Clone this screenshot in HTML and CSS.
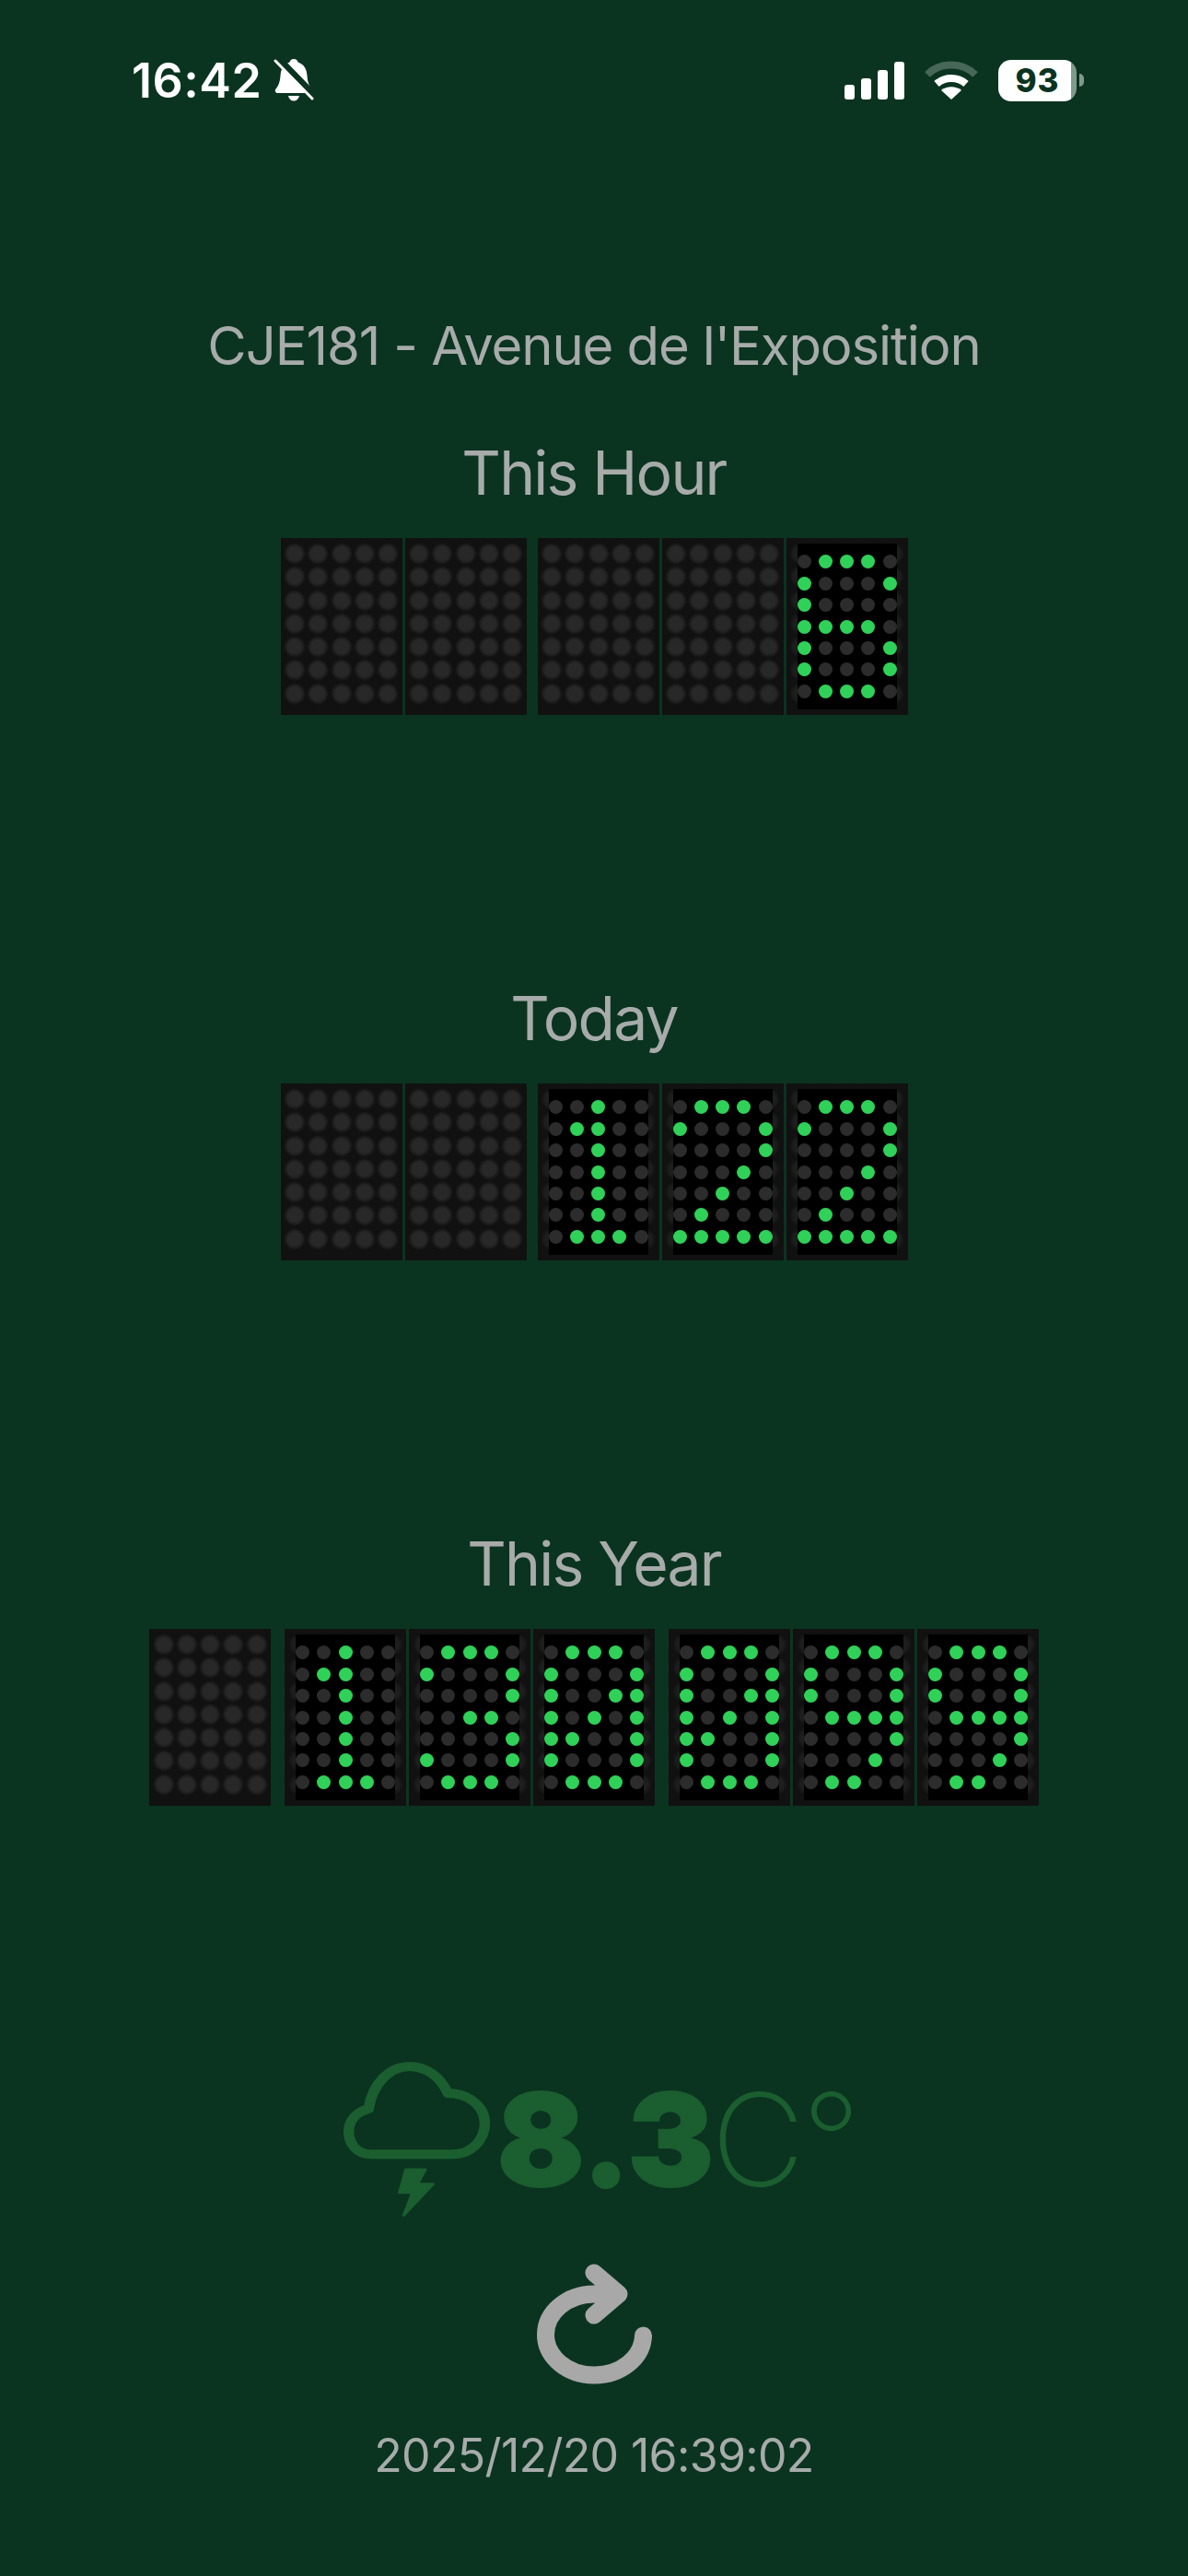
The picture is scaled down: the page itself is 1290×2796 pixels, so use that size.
FILE: index.html
```html
<!DOCTYPE html>
<html lang="en">
<head>
    <meta charset="UTF-8">
    <meta name="viewport" content="width=device-width, initial-scale=1.0">
    <title>Bike Counter</title>
    <link rel="stylesheet" href="styles.css">
</head>
<body>
    <div class="status-bar">
        <div class="status-left">
            <span class="clock">16:42</span>
            <svg class="bell" viewBox="0 0 44 48" aria-hidden="true">
                <path fill="#fff" d="M22 1c2.500 0 4 1.500 4.500 3.500C33 6.500 36 12 36.500 19c.5 7 2 11 5 14.500 1.500 2 .5 4.500-2 4.500H4.500c-2.500 0-3.500-2.500-2-4.500C5.500 30 7 26 7.500 19 8 12 11 6.500 17.500 4.500 18 2.500 19.500 1 22 1z"/>
                <path fill="#fff" d="M16 41h12c-.7 3.500-3 5.500-6 5.500S16.700 44.500 16 41z"/>
                <path stroke="#0a3420" stroke-width="7" d="M5 0l39 40"/>
                <path stroke="#fff" stroke-width="3" stroke-linecap="round" d="M2 3l40 41"/>
            </svg>
        </div>
        <div class="status-right">
            <div class="signal"><i></i><i></i><i></i><i></i></div>
            <svg class="wifi" viewBox="0 0 60 44" aria-hidden="true">
                <path fill="none" stroke="#fff" stroke-opacity="0.25" stroke-width="8" d="M4 16C18 2 42 2 56 16"/>
                <path fill="none" stroke="#fff" stroke-width="8" d="M14 26c9-8 23-8 32 0"/>
                <path fill="#fff" d="M19 33c6-5 16-5 22 0L30 43z"/>
            </svg>
            <div class="battery"><span class="battery-level">93</span></div>
            <div class="battery-nub"></div>
        </div>
    </div>

    <div class="main">
        <div class="location">CJE181 - Avenue de l'Exposition</div>

        <div class="counters">
            <div class="counter">
                <h2>This Hour</h2>
                <div class="digits narrow" data-value="    6" data-split="2"></div>
            </div>
            <div class="counter">
                <h2>Today</h2>
                <div class="digits narrow" data-value="  122" data-split="2"></div>
            </div>
            <div class="counter">
                <h2>This Year</h2>
                <div class="digits wide" data-value=" 130099" data-split="1,4"></div>
            </div>
        </div>

        <div class="weather">
            <svg class="weather-icon" viewBox="50 40 440 530" preserveAspectRatio="none" aria-hidden="true">
                <path class="cloud" d="M140 355C100 355 78 320 78 282C78 245 100 218 135 207C145 125 195 70 250 70C300 70 340 105 360 157C420 157 465 200 465 255C465 310 425 355 375 355Z"/>
                <path class="bolt" d="M240 405H296L274 452H318L234 554L259 480H222Z"/>
            </svg>
            <span class="temp">8.3</span><span class="unit">C°</span>
        </div>

        <svg class="refresh" viewBox="0 0 170 170" aria-hidden="true">
            <path d="M138.5 95A53 44 0 1 1 85 50H110M85 27L112 50L85 73"/>
        </svg>

        <div class="updated">2025/12/20 16:39:02</div>
    </div>

    <script>
        // 5x7 patterns, one string per digit
        const FONT = {
            '0': '01110 10001 10011 10101 11001 10001 01110',
            '1': '00100 01100 00100 00100 00100 00100 01110',
            '2': '01110 10001 00001 00010 00100 01000 11111',
            '3': '01110 10001 00001 00110 00001 10001 01110',
            '6': '01110 10001 10000 11110 10001 10001 01110',
            '9': '01110 10001 10001 01111 00001 00010 01100'
        };

        function dotGrid(className, pattern) {
            const grid = document.createElement('div');
            grid.className = className;
            for (let i = 0; i < 35; i++) {
                const dot = document.createElement('i');
                if (pattern && pattern[i] === '1') dot.className = 'on';
                grid.appendChild(dot);
            }
            return grid;
        }

        document.querySelectorAll('.digits').forEach(function(row) {
            const splits = row.dataset.split.split(',').map(Number);
            row.dataset.value.split('').forEach(function(ch, index) {
                const panel = document.createElement('div');
                panel.className = 'panel';
                if (splits.includes(index)) panel.classList.add('group-start');
                panel.appendChild(dotGrid('ghost'));
                if (FONT[ch]) {
                    panel.classList.add('lit');
                    panel.appendChild(dotGrid('screen', FONT[ch].replace(/ /g, '')));
                }
                row.appendChild(panel);
            });
        });
    </script>
</body>
</html>
```

FILE: styles.css
```css
body {
    font-family: Inter, "Noto Sans", sans-serif;
    margin: 0;
    padding: 0;
    width: 1290px;
    height: 2796px;
    overflow: hidden;
    background-color: #0a3420;
    color: #a7abaa;
}
.status-bar {
    display: flex;
    justify-content: space-between;
    align-items: center;
    height: 174px;
    padding: 0 113px 0 143px;
    box-sizing: border-box;
}
.status-left, .status-right {
    display: flex;
    align-items: center;
}
.clock {
    color: #fff;
    font-size: 52px;
    font-weight: 600;
    letter-spacing: 0.5px;
}
.bell {
    width: 44px;
    height: 48px;
    margin-left: 13px;
}
.signal {
    display: flex;
    align-items: flex-end;
    gap: 7px;
    height: 41px;
}
.signal i {
    width: 11px;
    background: #fff;
    border-radius: 3px;
}
.signal i:nth-child(1) { height: 16px; }
.signal i:nth-child(2) { height: 23px; }
.signal i:nth-child(3) { height: 32px; }
.signal i:nth-child(4) { height: 41px; }
.wifi {
    width: 60px;
    height: 44px;
    margin-left: 21px;
}
.battery {
    width: 85px;
    height: 45px;
    margin-left: 21px;
    border-radius: 14px;
    background: linear-gradient(to right, #fff 93%, #7f9a8c 93%);
    display: flex;
    align-items: center;
    justify-content: center;
}
.battery-level {
    color: #0a3420;
    font-size: 35px;
    font-weight: 800;
    letter-spacing: 1px;
}
.battery-nub {
    width: 5px;
    height: 14px;
    margin-left: 3px;
    border-radius: 0 5px 5px 0;
    background: #7f9a8c;
}
.main {
    display: flex;
    flex-direction: column;
    align-items: center;
}
.location {
    margin-top: 166px;
    font-size: 58px;
    line-height: 70px;
    letter-spacing: -1.1px;
}
.counters {
    display: flex;
    flex-direction: column;
    gap: 289px;
    margin-top: 63px;
}
.counter {
    display: flex;
    flex-direction: column;
    align-items: center;
}
h2 {
    margin: 0 0 31px;
    font-size: 66px;
    font-weight: 400;
    line-height: 80px;
    letter-spacing: -1.8px;
}
.digits {
    display: flex;
    gap: 3px;
}
.panel {
    position: relative;
    width: 132px;
    height: 192px;
    background: #111;
    overflow: hidden;
}
.narrow .group-start { margin-left: 9px; }
.wide .group-start { margin-left: 12px; }
.ghost {
    display: grid;
    grid-template-columns: repeat(5, 20px);
    grid-template-rows: repeat(7, 20px);
    gap: 5.3px;
    padding: 7px 0 0 5.5px;
    filter: blur(1.5px);
}
.ghost i {
    border-radius: 50%;
    background: #282828;
}
.lit .ghost i { background: #1e1e1e; }
.screen {
    position: absolute;
    top: 6px;
    left: 12px;
    width: 108px;
    height: 180px;
    box-sizing: border-box;
    display: grid;
    grid-template-columns: repeat(5, 15px);
    grid-template-rows: repeat(7, 15px);
    justify-content: space-between;
    align-content: center;
    row-gap: 8.4px;
    background: #000;
}
.screen i {
    border-radius: 50%;
    background: #2c2c2c;
}
.screen i.on { background: #30d158; }
.weather {
    display: flex;
    align-items: flex-start;
    height: 208px;
    margin-top: 273px;
    padding-left: 9px;
    color: #1b5e2f;
}
.weather-icon {
    width: 168px;
    height: 177px;
    overflow: visible;
}
.cloud {
    fill: none;
    stroke: #1b5e2f;
    stroke-width: 30;
    stroke-linejoin: round;
}
.bolt {
    fill: #1b5e2f;
    stroke: #1b5e2f;
    stroke-width: 8;
    stroke-linejoin: round;
}
.temp {
    font-size: 140px;
    font-weight: 900;
    line-height: 140px;
    -webkit-text-stroke: 2px #1b5e2f;
    margin: 19px 0 0 4px;
}
.unit {
    font-size: 140px;
    font-weight: 200;
    line-height: 140px;
    letter-spacing: -3px;
    margin: 19px 0 0 -3px;
}
.refresh {
    width: 170px;
    height: 170px;
    margin-top: -1px;
}
.refresh path {
    fill: none;
    stroke: #a8a8a8;
    stroke-width: 19;
    stroke-linecap: round;
    stroke-linejoin: round;
}
.updated {
    margin-top: 25px;
    font-size: 50px;
    line-height: 60px;
    letter-spacing: -0.66px;
}
```
